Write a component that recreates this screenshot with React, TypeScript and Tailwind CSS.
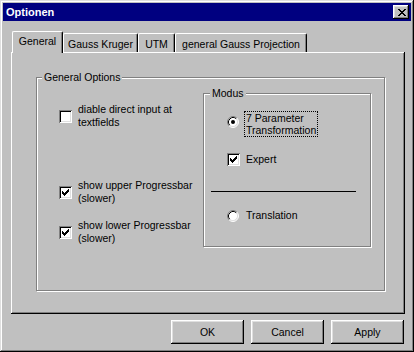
import React from 'react';

const CHECK: [number, number, number][] = [
  [6, 0, 1],
  [5, 1, 2],
  [0, 2, 1],
  [4, 2, 3],
  [0, 3, 2],
  [3, 3, 3],
  [0, 4, 5],
  [1, 5, 3],
  [2, 6, 1],
];

const XGLYPH: [number, number, number][] = [
  [0, 0, 2],
  [6, 0, 2],
  [1, 1, 2],
  [5, 1, 2],
  [2, 2, 4],
  [3, 3, 2],
  [2, 4, 4],
  [1, 5, 2],
  [5, 5, 2],
  [0, 6, 2],
  [6, 6, 2],
];

function Checkbox({ checked }: { checked?: boolean }) {
  return (
    <div className="w-[13px] h-[13px] shrink-0 bg-white flex items-center justify-center shadow-[inset_1px_1px_#808080,inset_-1px_-1px_#fff,inset_2px_2px_#000,inset_-2px_-2px_#dfdfdf]">
      {checked && (
        <svg width="7" height="7" viewBox="0 0 7 7" shapeRendering="crispEdges" className="block">
          {CHECK.map(([x, y, w], i) => (
            <rect key={i} x={x} y={y} width={w} height={1} fill="#000" />
          ))}
        </svg>
      )}
    </div>
  );
}

function Radio({ checked }: { checked?: boolean }) {
  return (
    <svg width="12" height="12" viewBox="0 0 12 12" className="block shrink-0">
      <circle cx="6" cy="6" r="5" fill="#fff" />
      <path d="M2.11 9.89 A5.5 5.5 0 0 1 9.89 2.11" stroke="#808080" fill="none" />
      <path d="M9.89 2.11 A5.5 5.5 0 0 1 2.11 9.89" stroke="#fff" fill="none" />
      <path d="M2.82 9.18 A4.5 4.5 0 0 1 9.18 2.82" stroke="#000" fill="none" />
      <path d="M9.18 2.82 A4.5 4.5 0 0 1 2.82 9.18" stroke="#dfdfdf" fill="none" />
      {checked && <circle cx="6" cy="6" r="2" fill="#000" />}
    </svg>
  );
}

function Button({ label }: { label: string }) {
  return (
    <div className="w-[73px] h-[24px] flex items-center justify-center bg-[#c0c0c0] shadow-[inset_-1px_-1px_#000,inset_1px_1px_#fff,inset_-2px_-2px_#808080,inset_2px_2px_#dfdfdf]">
      {label}
    </div>
  );
}

export default function App() {
  return (
    <div className="w-[414px] h-[352px] bg-[#c0c0c0] p-[3px] flex flex-col font-['Liberation_Sans',Arial,sans-serif] text-[10.5px] leading-[13px] text-black shadow-[inset_-1px_-1px_#000,inset_1px_1px_#dfdfdf,inset_-2px_-2px_#808080,inset_2px_2px_#fff]">
      {/* Title bar */}
      <div className="h-[18px] shrink-0 bg-[#000080] flex items-center justify-between pl-[3px] pr-[2px]">
        <span className="text-white font-bold text-[11px] leading-[13px] pt-px">Optionen</span>
        <div className="w-[16px] h-[14px] bg-[#c0c0c0] flex items-center justify-center pl-px shadow-[inset_-1px_-1px_#000,inset_1px_1px_#fff,inset_-2px_-2px_#808080,inset_2px_2px_#dfdfdf]">
          <svg width="8" height="7" viewBox="0 0 8 7" shapeRendering="crispEdges" className="block">
            {XGLYPH.map(([x, y, w], i) => (
              <rect key={i} x={x} y={y} width={w} height={1} fill="#000" />
            ))}
          </svg>
        </div>
      </div>

      {/* Tabs */}
      <div className="mt-[10px] h-[21px] shrink-0 flex items-end pl-[9px]">
        <div className="relative z-10 -mb-px w-[51px] h-[22px] bg-[#c0c0c0] border-l border-t border-white border-r border-r-black rounded-tl-[2px] rounded-tr-[2px] shadow-[inset_-1px_0_#808080] pt-[3px] text-center">
          General
        </div>
        <div className="w-[75px] h-[19px] border-t border-l border-white border-r border-r-black rounded-tl-[2px] rounded-tr-[2px] shadow-[inset_-1px_0_#808080] pt-[4px] text-center">
          Gauss Kruger
        </div>
        <div className="w-[37px] h-[19px] border-t border-l border-white border-r border-r-black rounded-tl-[2px] rounded-tr-[2px] shadow-[inset_-1px_0_#808080] pt-[4px] text-center">
          UTM
        </div>
        <div className="w-[132px] h-[19px] border-t border-l border-white border-r border-r-black rounded-tl-[2px] rounded-tr-[2px] shadow-[inset_-1px_0_#808080] pt-[4px] text-center">
          general Gauss Projection
        </div>
      </div>

      {/* Panel */}
      <div className="ml-[8px] w-[394px] h-[262px] shrink-0 pl-[25px] pt-[25px] shadow-[inset_-1px_-1px_#000,inset_1px_1px_#fff,inset_-2px_-2px_#808080]">
        <div className="relative w-[349px] h-[214px] border border-[#808080] shadow-[inset_1px_1px_#fff,1px_1px_#fff] flex">
          <span className="absolute left-[5px] -top-[7px] bg-[#c0c0c0] px-[2px]">General Options</span>

          {/* Left column */}
          <div className="w-[166px] shrink-0 flex flex-col pl-[22px]">
            <div className="mt-[25px] flex items-center gap-[6px]">
              <Checkbox />
              <span>
                diable direct input at
                <br />
                textfields
              </span>
            </div>
            <div className="mt-[50px] flex items-center gap-[6px]">
              <Checkbox checked />
              <span>
                show upper Progressbar
                <br />
                (slower)
              </span>
            </div>
            <div className="mt-[14px] flex items-center gap-[6px]">
              <Checkbox checked />
              <span>
                show lower Progressbar
                <br />
                (slower)
              </span>
            </div>
          </div>

          {/* Modus */}
          <div className="relative mt-[15px] w-[168px] h-[154px] shrink-0 border border-[#808080] shadow-[inset_1px_1px_#fff,1px_1px_#fff] flex flex-col">
            <span className="absolute left-[6px] -top-[7px] bg-[#c0c0c0] px-[2px]">Modus</span>
            <div className="mt-[17px] ml-[23px] flex items-start gap-[5px]">
              <div className="mt-[5px]">
                <Radio checked />
              </div>
              <span className="border border-dotted border-black px-px leading-[12px]">
                7 Parameter
                <br />
                Transformation
              </span>
            </div>
            <div className="mt-[16px] ml-[23px] flex items-center gap-[6px]">
              <Checkbox checked />
              <span>Expert</span>
            </div>
            <div className="mt-[25px] ml-[7px] w-[145px] h-px bg-black" />
            <div className="mt-[17px] ml-[23px] h-[13px] flex items-center gap-[7px]">
              <Radio />
              <span>Translation</span>
            </div>
          </div>
        </div>
      </div>

      {/* Buttons */}
      <div className="mt-[6px] flex justify-end gap-[7px] pr-[7px]">
        <Button label="OK" />
        <Button label="Cancel" />
        <Button label="Apply" />
      </div>
    </div>
  );
}
